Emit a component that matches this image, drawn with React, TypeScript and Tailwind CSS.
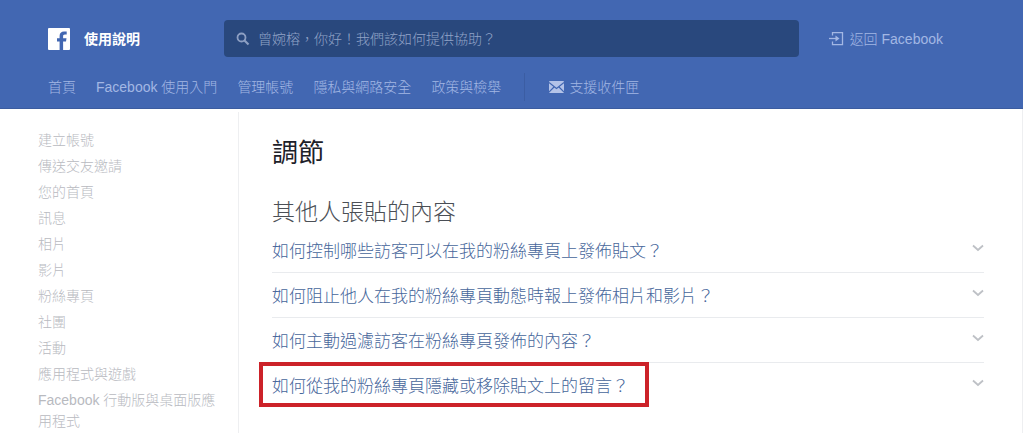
import { useState } from "react";

type Question = {
  id: string;
  text: string;
  highlighted?: boolean;
};

const NAV_LINKS = ["首頁", "Facebook 使用入門", "管理帳號", "隱私與網路安全", "政策與檢舉"];

const SIDEBAR_LINKS = [
  "建立帳號",
  "傳送交友邀請",
  "您的首頁",
  "訊息",
  "相片",
  "影片",
  "粉絲專頁",
  "社團",
  "活動",
  "應用程式與遊戲",
  "Facebook 行動版與桌面版應用程式",
];

const QUESTIONS: Question[] = [
  { id: "who-can-post", text: "如何控制哪些訪客可以在我的粉絲專頁上發佈貼文？" },
  { id: "block-photos", text: "如何阻止他人在我的粉絲專頁動態時報上發佈相片和影片？" },
  { id: "filter", text: "如何主動過濾訪客在粉絲專頁發佈的內容？" },
  { id: "hide-comments", text: "如何從我的粉絲專頁隱藏或移除貼文上的留言？", highlighted: true },
];

function FacebookLogo() {
  return (
    <svg viewBox="0 0 22 22" className="h-[22px] w-[22px] shrink-0" aria-hidden="true">
      <rect width="22" height="22" rx="1" fill="#fff" />
      <path
        d="M11.600 22v-8.400H9v-3.400h2.600V8c0-3 1.700-4.600 4.400-4.600.9 0 1.900.1 2.700.2v3h-1.700c-1.500 0-1.900.7-1.900 1.800v1.800h3.400l-.5 3.400h-2.900V22z"
        fill="#4267b2"
      />
    </svg>
  );
}

function SearchIcon() {
  return (
    <svg viewBox="0 0 14 14" className="h-[14px] w-[14px] shrink-0" fill="none" stroke="#8d9fc3" aria-hidden="true">
      <circle cx="5.5" cy="5.5" r="4" strokeWidth="1.8" />
      <path d="M8.500 8.500l4 4" strokeWidth="2.2" />
    </svg>
  );
}

function ReturnIcon() {
  return (
    <svg viewBox="0 0 15 15" className="h-[15px] w-[15px] shrink-0" fill="none" stroke="#a3b7e4" strokeWidth="1.3" aria-hidden="true">
      <path d="M3.500 4.500V1.600h10v12h-10v-3" />
      <path d="M0 7.500h9" />
      <path d="M6.500 4.500l4 3-4 3z" fill="#a3b7e4" stroke="none" />
    </svg>
  );
}

function MailIcon() {
  return (
    <svg viewBox="0 0 15 12" className="h-[12px] w-[15px] shrink-0" aria-hidden="true">
      <rect width="15" height="12" rx="1" fill="#b4c3e8" />
      <path d="M0 1.500l7.500 6 7.500-6M0 11l5-5M15 11l-5-5" fill="none" stroke="#4267b2" strokeWidth="1.2" />
    </svg>
  );
}

function ChevronIcon() {
  return (
    <svg viewBox="0 0 12 8" className="mt-0.5 h-[8px] w-[12px] shrink-0" fill="none" stroke="#bec1c6" strokeWidth="1.8" aria-hidden="true">
      <path d="M1 1.500l5 4.500 5-4.500" />
    </svg>
  );
}

function Header() {
  const [query, setQuery] = useState("");

  return (
    <header className="mr-px border-b border-[#3b5c9f] bg-[#4267b2] pl-12 pr-20 text-sm text-[#a3b7e4]">
      <div className="flex items-center pt-5">
        <a href="#home" className="flex w-44 shrink-0 items-center gap-[14px] font-bold text-white">
          <FacebookLogo />
          使用說明
        </a>
        <form className="flex h-[37px] flex-1 items-center gap-2 rounded-sm bg-[#29487d] px-3" onSubmit={(e) => e.preventDefault()}>
          <SearchIcon />
          <input
            type="text"
            aria-label="搜尋使用說明"
            value={query}
            onChange={(e) => setQuery(e.target.value)}
            placeholder="曾婉榕，你好！我們該如何提供協助？"
            className="min-w-0 flex-1 bg-transparent text-white outline-none placeholder:text-[#91a3c7]"
          />
        </form>
        <a href="#facebook" className="ml-[30px] flex items-center gap-[6px] whitespace-nowrap">
          <ReturnIcon />
          返回 Facebook
        </a>
      </div>
      <nav className="flex items-center pb-[7px] pt-4">
        <ul className="flex items-center gap-5 whitespace-nowrap">
          {NAV_LINKS.map((label) => (
            <li key={label}>
              <a href="#nav">{label}</a>
            </li>
          ))}
        </ul>
        <a href="#inbox" className="ml-[23px] flex h-7 items-center gap-[5px] whitespace-nowrap border-l border-[#3b5da3] pl-6">
          <MailIcon />
          支援收件匣
        </a>
      </nav>
    </header>
  );
}

function Sidebar() {
  return (
    <aside className="mt-[3px] w-[239px] shrink-0 border-r border-[#eeeff1] pl-[38px] pr-4 pt-[18px] text-sm leading-[21px] text-[#b8babf]">
      <ul className="flex flex-col gap-[5px]">
        {SIDEBAR_LINKS.map((label) => (
          <li key={label}>
            <a href="#topic">{label}</a>
          </li>
        ))}
      </ul>
    </aside>
  );
}

function QuestionRow({ question }: { question: Question }) {
  const [open, setOpen] = useState(false);

  return (
    <li className="border-b border-[#e9ebee] last:border-b-0">
      <button
        type="button"
        aria-expanded={open}
        onClick={() => setOpen(!open)}
        className="flex w-full items-start justify-between pb-[10px] pt-[14px] text-left text-[17px] leading-5 text-[#46669b]"
      >
        <span className="relative">
          {question.text}
          {question.highlighted && (
            <span className="absolute -bottom-[10px] -left-[13px] -right-5 -top-[15px] border-4 border-[#cc2229]" />
          )}
        </span>
        <ChevronIcon />
      </button>
    </li>
  );
}

export default function App() {
  return (
    <div className="flex min-h-screen flex-col bg-white font-['Liberation_Sans','Noto_Sans_CJK_TC',sans-serif] font-light">
      <Header />
      <div className="mr-px flex flex-1 border-r border-[#eeeff1]">
        <Sidebar />
        <main className="flex-1 pl-[33px] pr-[38px] pt-7">
          <h1 className="text-[26px] font-normal leading-8 text-[#1d2129]">調節</h1>
          <section className="pt-[29px]">
            <h2 className="pb-0.5 text-[23px] leading-7 text-[#4b4f56]">其他人張貼的內容</h2>
            <ul>
              {QUESTIONS.map((question) => (
                <QuestionRow key={question.id} question={question} />
              ))}
            </ul>
          </section>
        </main>
      </div>
    </div>
  );
}
